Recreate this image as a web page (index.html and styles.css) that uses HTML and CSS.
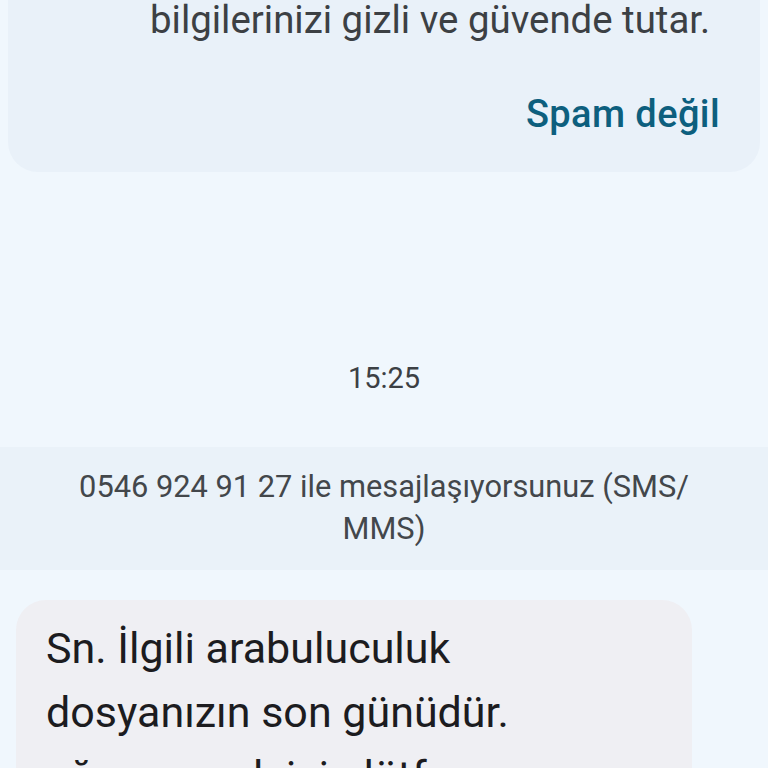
FILE: index.html
```html
<!DOCTYPE html>
<html lang="tr">
<head>
  <meta charset="UTF-8" />
  <meta name="viewport" content="width=device-width, initial-scale=1.0"/>
  <title>Mesajlar</title>
  <link rel="stylesheet" href="styles.css">
</head>
<body>
  <div class="thread">
    <div class="spam-card">
      <p class="spam-text">bilgilerinizi gizli ve güvende tutar.</p>
      <div class="spam-actions">
        <button type="button" class="not-spam">Spam değil</button>
      </div>
    </div>

    <div class="timestamp">15:25</div>

    <div class="info-band">
      0546 924 91 27 ile mesajlaşıyorsunuz (SMS/<br>MMS)
    </div>

    <div class="message incoming">
      <p>Sn. İlgili arabuluculuk<br>dosyanızın son günüdür.<br>uğramamak için lütfen</p>
    </div>
  </div>
</body>
</html>
```

FILE: styles.css
```css
html, body {
  margin: 0;
  padding: 0;
  height: 100%;
}

body {
  font-family: Roboto, "Noto Sans", Arial, sans-serif;
  background: #f0f7fd;
  overflow: hidden;
}

.thread {
  display: flex;
  flex-direction: column;
}

.spam-card {
  margin: 0 8px;
  padding: 0 40px 36px 142px;
  background: #e9f1f9;
  border-radius: 0 0 30px 30px;
}

.spam-text {
  margin: -2px 0 0;
  font-size: 38.4px;
  line-height: 44px;
  color: #3c4044;
}

.spam-actions {
  display: flex;
  justify-content: flex-end;
  margin-top: 50px;
}

.not-spam {
  padding: 0;
  border: none;
  background: none;
  font-family: inherit;
  font-size: 38px;
  font-weight: 500;
  letter-spacing: 0.4px;
  line-height: 44px;
  color: #0d5f7e;
  cursor: pointer;
}

.timestamp {
  margin-top: 189px;
  text-align: center;
  font-size: 29px;
  line-height: 34px;
  color: #3c4044;
}

.info-band {
  margin-top: 52px;
  padding: 19px 40px 20px;
  background: #eaf2f9;
  text-align: center;
  font-size: 30.8px;
  line-height: 42px;
  color: #43474b;
}

.message {
  margin: 30px 0 0 16px;
  width: 676px;
  box-sizing: border-box;
  padding: 16px 28px 20px 30px;
  background: #efeff3;
  border-radius: 30px;
}

.message p {
  margin: 0;
  font-size: 43px;
  line-height: 64px;
  color: #1c1c1f;
}
```
